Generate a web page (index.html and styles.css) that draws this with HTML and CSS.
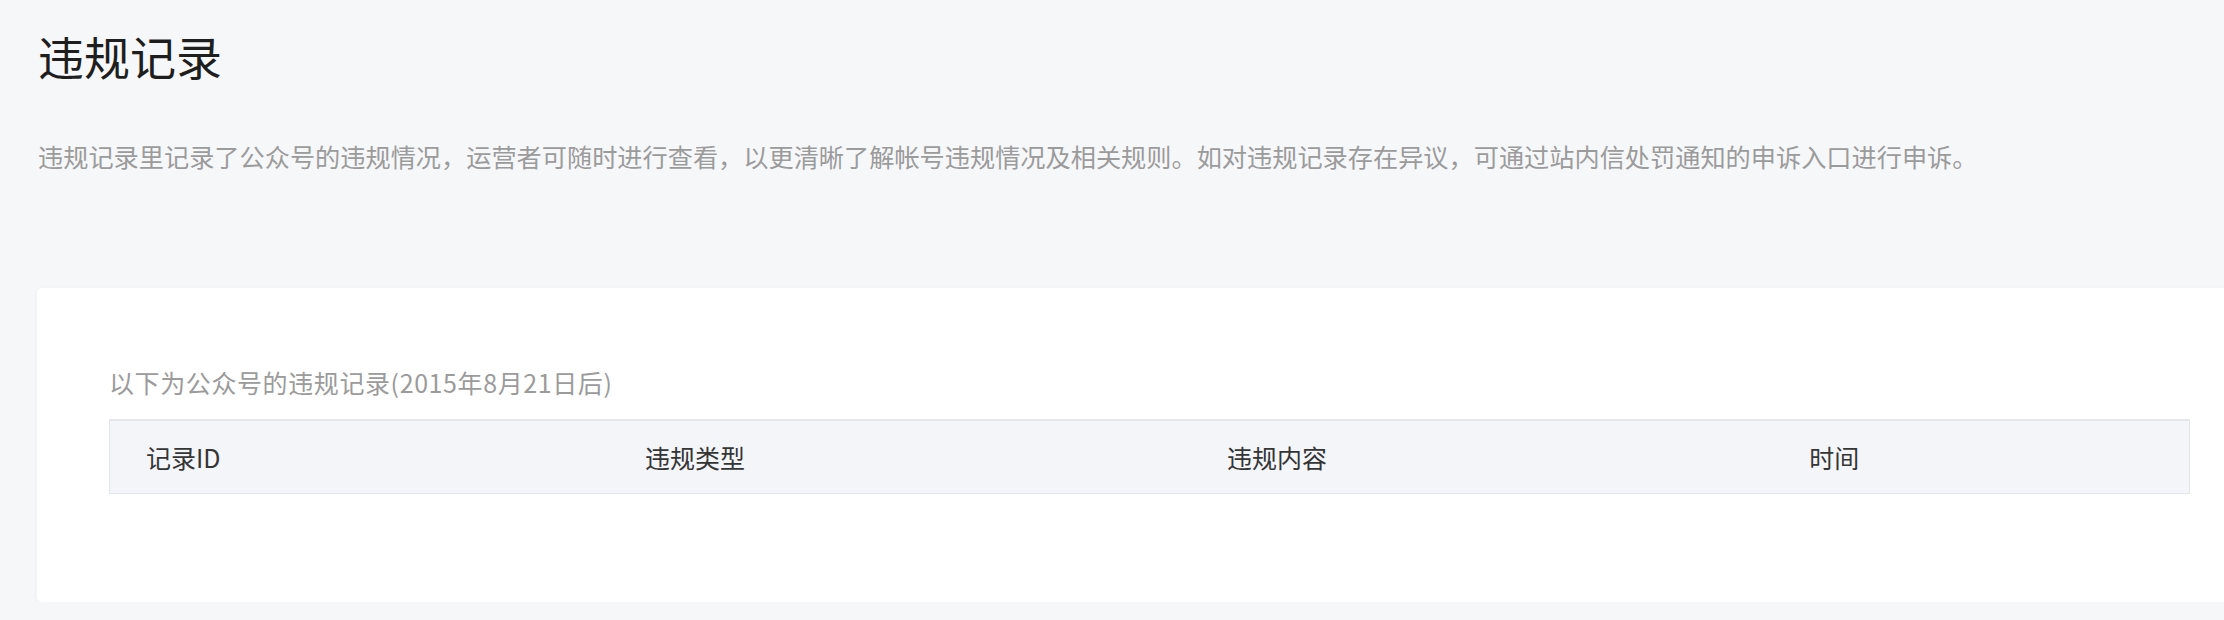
FILE: index.html
```html
<!DOCTYPE html>
<html lang="zh-CN">
<head>
<meta charset="utf-8">
<title>违规记录</title>
<link rel="stylesheet" href="styles.css">
</head>
<body>
<div class="page">
  <h1 class="title">违规记录</h1>
  <p class="desc">违规记录里记录了公众号的违规情况，运营者可随时进行查看，以更清晰了解帐号违规情况及相关规则。如对违规记录存在异议，可通过站内信处罚通知的申诉入口进行申诉。</p>
  <div class="card">
    <p class="subtitle">以下为公众号的违规记录(2015年8月21日后)</p>
    <div class="table">
      <div class="thead">
        <div class="th">记录ID</div>
        <div class="th">违规类型</div>
        <div class="th">违规内容</div>
        <div class="th">时间</div>
      </div>
    </div>
  </div>
</div>
</body>
</html>
```
FILE: styles.css
```css
html, body {
  margin: 0;
  padding: 0;
  overflow: hidden;
}
body {
  background: #f6f7f9;
  font-family: "PingFang SC", "Noto Sans CJK SC", "Noto Sans", sans-serif;
}
.page {
  padding: 23px 0 0 38px;
}
.title {
  margin: 0;
  font-size: 46px;
  line-height: 64px;
  font-weight: 400;
  color: #1e1e1e;
}
.desc {
  margin: 51px 0 0 0;
  font-size: 25.2px;
  line-height: 36px;
  color: #9b9b9b;
  white-space: nowrap;
}
.card {
  margin: 114px -39px 0 -1px;
  padding: 76px 73px 108px 72px;
  background: #ffffff;
  border-radius: 5px;
  box-shadow: 0 1px 6px rgba(0, 0, 0, 0.04);
}
.subtitle {
  margin: 0;
  font-size: 25px;
  line-height: 36px;
  letter-spacing: 0.6px;
  color: #9b9b9b;
}
.table {
  margin-top: 19px;
  border: 1px solid #e4e6eb;
  border-top-width: 2px;
  background: #f4f5f9;
}
.thead {
  display: grid;
  grid-template-columns: 24% 28% 28% 20%;
  height: 72px;
  align-items: center;
}
.th {
  padding-left: 36px;
  font-size: 25px;
  line-height: 36px;
  color: #353535;
}
```
